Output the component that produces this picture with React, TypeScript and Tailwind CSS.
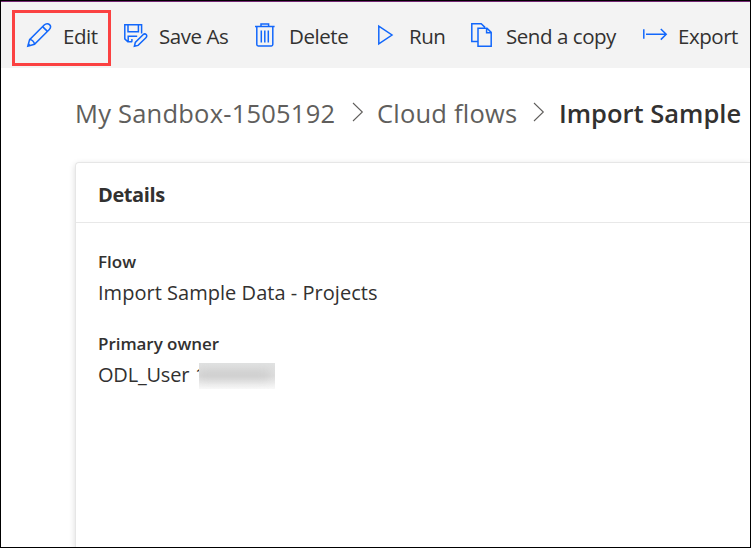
import type { ReactNode } from "react";

function Icon({ children }: { children: ReactNode }) {
  return (
    <svg
      width="26"
      height="26"
      viewBox="0 0 26 26"
      fill="none"
      stroke="#1267fb"
      strokeWidth="1.5"
      className="shrink-0"
    >
      {children}
    </svg>
  );
}

const pencil = (
  <Icon>
    <path d="M1.8 24.2 3.6 17.6 18.2 3C20 1.2 22.2 1.3 23.5 2.6C24.8 3.9 24.8 6 23.1 7.7L8.5 22.3Z" />
    <path d="M16.6 4.6 21.4 9.4M3.6 17.6C6 17.6 8.3 19.8 8.5 22.3M2.3 21.9 4.2 23.7" />
  </Icon>
);
const save = (
  <Icon>
    <path d="M9.2 19.7H4.8L1.8 16.9V2.8H18.6V11.6M5 3V9.8H15.4V3M9.2 19.7H5.2V14.3H14.2M8.9 17V19.7" />
    <path d="M11.4 24.2 12.3 20.5 20 12.8C21.1 11.7 22.4 11.7 23.2 12.5C24 13.3 24 14.6 22.9 15.7L15.1 23.4Z" />
  </Icon>
);
const trash = (
  <Icon>
    <path d="M2 4.5H21.6M8 4V2H15.6V4M3.8 5V22.6Q3.8 24 5.2 24H18.4Q19.8 24 19.8 22.6V5M8.3 8.5V20.4M11.8 8.5V20.4M15.3 8.5V20.4" />
  </Icon>
);
const play = (
  <Icon>
    <path d="M5.8 4.2V21.8L19 13Z" />
  </Icon>
);
const copy = (
  <Icon>
    <path d="M8 19.6H1.8V1.8H11.2L15 5.4M8 6.2H17L21.2 10.4V24.2H8ZM16.6 6.4V10.8H21" />
  </Icon>
);
const exportArrow = (
  <Icon>
    <path d="M1.8 7.3V16.8M4 12.3H24M18.8 7 24.2 12.3 18.8 17.6" />
  </Icon>
);

function Command({ icon, label, className }: { icon: ReactNode; label: string; className: string }) {
  return (
    <button className={`flex h-full shrink-0 items-center ${className}`}>
      {icon}
      <span className="ml-[10px] whitespace-nowrap pt-[3px]">{label}</span>
    </button>
  );
}

function Chevron() {
  return (
    <svg width="12" height="20" viewBox="0 0 12 20" fill="none" stroke="#605e5c" strokeWidth="1.1" className="mb-[2px] shrink-0">
      <path d="M1 1 10.3 10 1 19" />
    </svg>
  );
}

export default function App() {
  return (
    <div className="flex h-[548px] w-[751px] flex-col overflow-hidden border border-black bg-white font-['Open_Sans','Noto_Sans',sans-serif] text-[#323130]">
      <nav className="flex h-[67px] shrink-0 border-t border-[#742774] bg-[#f3f3f3] pl-[11px] text-[20.5px] tracking-[-0.45px]">
        <div className="mt-2 h-14 w-[99px] shrink-0 border-3 border-[#fb4141]">
          <button className="flex h-full items-start pl-[11px] pt-[9px]">
            {pencil}
            <span className="ml-[11px] leading-[28px]">Edit</span>
          </button>
        </div>
        <Command icon={save} label="Save As" className="ml-[12px] w-[130px]" />
        <Command icon={trash} label="Delete" className="w-[120px]" />
        <Command icon={play} label="Run" className="w-[97px]" />
        <Command icon={copy} label="Send a copy" className="w-[172px]" />
        <Command icon={exportArrow} label="Export" className="" />
      </nav>
      <div className="mt-[25px] flex h-10 shrink-0 items-center whitespace-nowrap pl-[74px] text-[25.5px] tracking-[0.22px] text-[#605e5c]">
        <span className="w-[277px]">My Sandbox-1505192</span>
        <Chevron />
        <span className="ml-[13px] w-[156px]">Cloud flows</span>
        <Chevron />
        <span className="ml-[14px] font-semibold tracking-[0px] text-[#323130]">Import Sample</span>
      </div>
      <main className="ml-[74px] mt-[29px] flex-1 rounded-tl-[4px] border-l border-t border-[#e6e6e6] shadow-[0_2px_6px_rgba(0,0,0,0.15)]">
        <h2 className="flex h-[60px] items-center border-b border-[#e8e8e8] pl-[22px] pt-[4px] text-[20px] font-bold tracking-[-0.4px]">Details</h2>
        <dl className="pl-[22px] pt-[24px] text-[20px] tracking-[0.03px]">
          <dt className="h-[30px] text-[17px] font-semibold leading-[30px] tracking-[0px]">Flow</dt>
          <dd className="h-[52px] leading-[32px]">Import Sample Data - Projects</dd>
          <dt className="h-[30px] text-[17px] font-semibold leading-[30px] tracking-[-0.05px]">Primary owner</dt>
          <dd className="flex leading-[32px]">
            <span className="w-[97px] whitespace-nowrap tracking-[-0.2px]">ODL_User</span>
            <span className="w-[4px]">1</span>
            <span className="relative mt-[4px] h-[26px] w-[76px] overflow-hidden bg-linear-to-b from-[#e1e2e2] via-[#dddddd] to-[#f9f9f9]">
              <span className="block h-2.5 w-[70px] translate-y-[7px] bg-[#b8b8b8]/45 blur-[5px]" />
            </span>
          </dd>
        </dl>
      </main>
    </div>
  );
}
